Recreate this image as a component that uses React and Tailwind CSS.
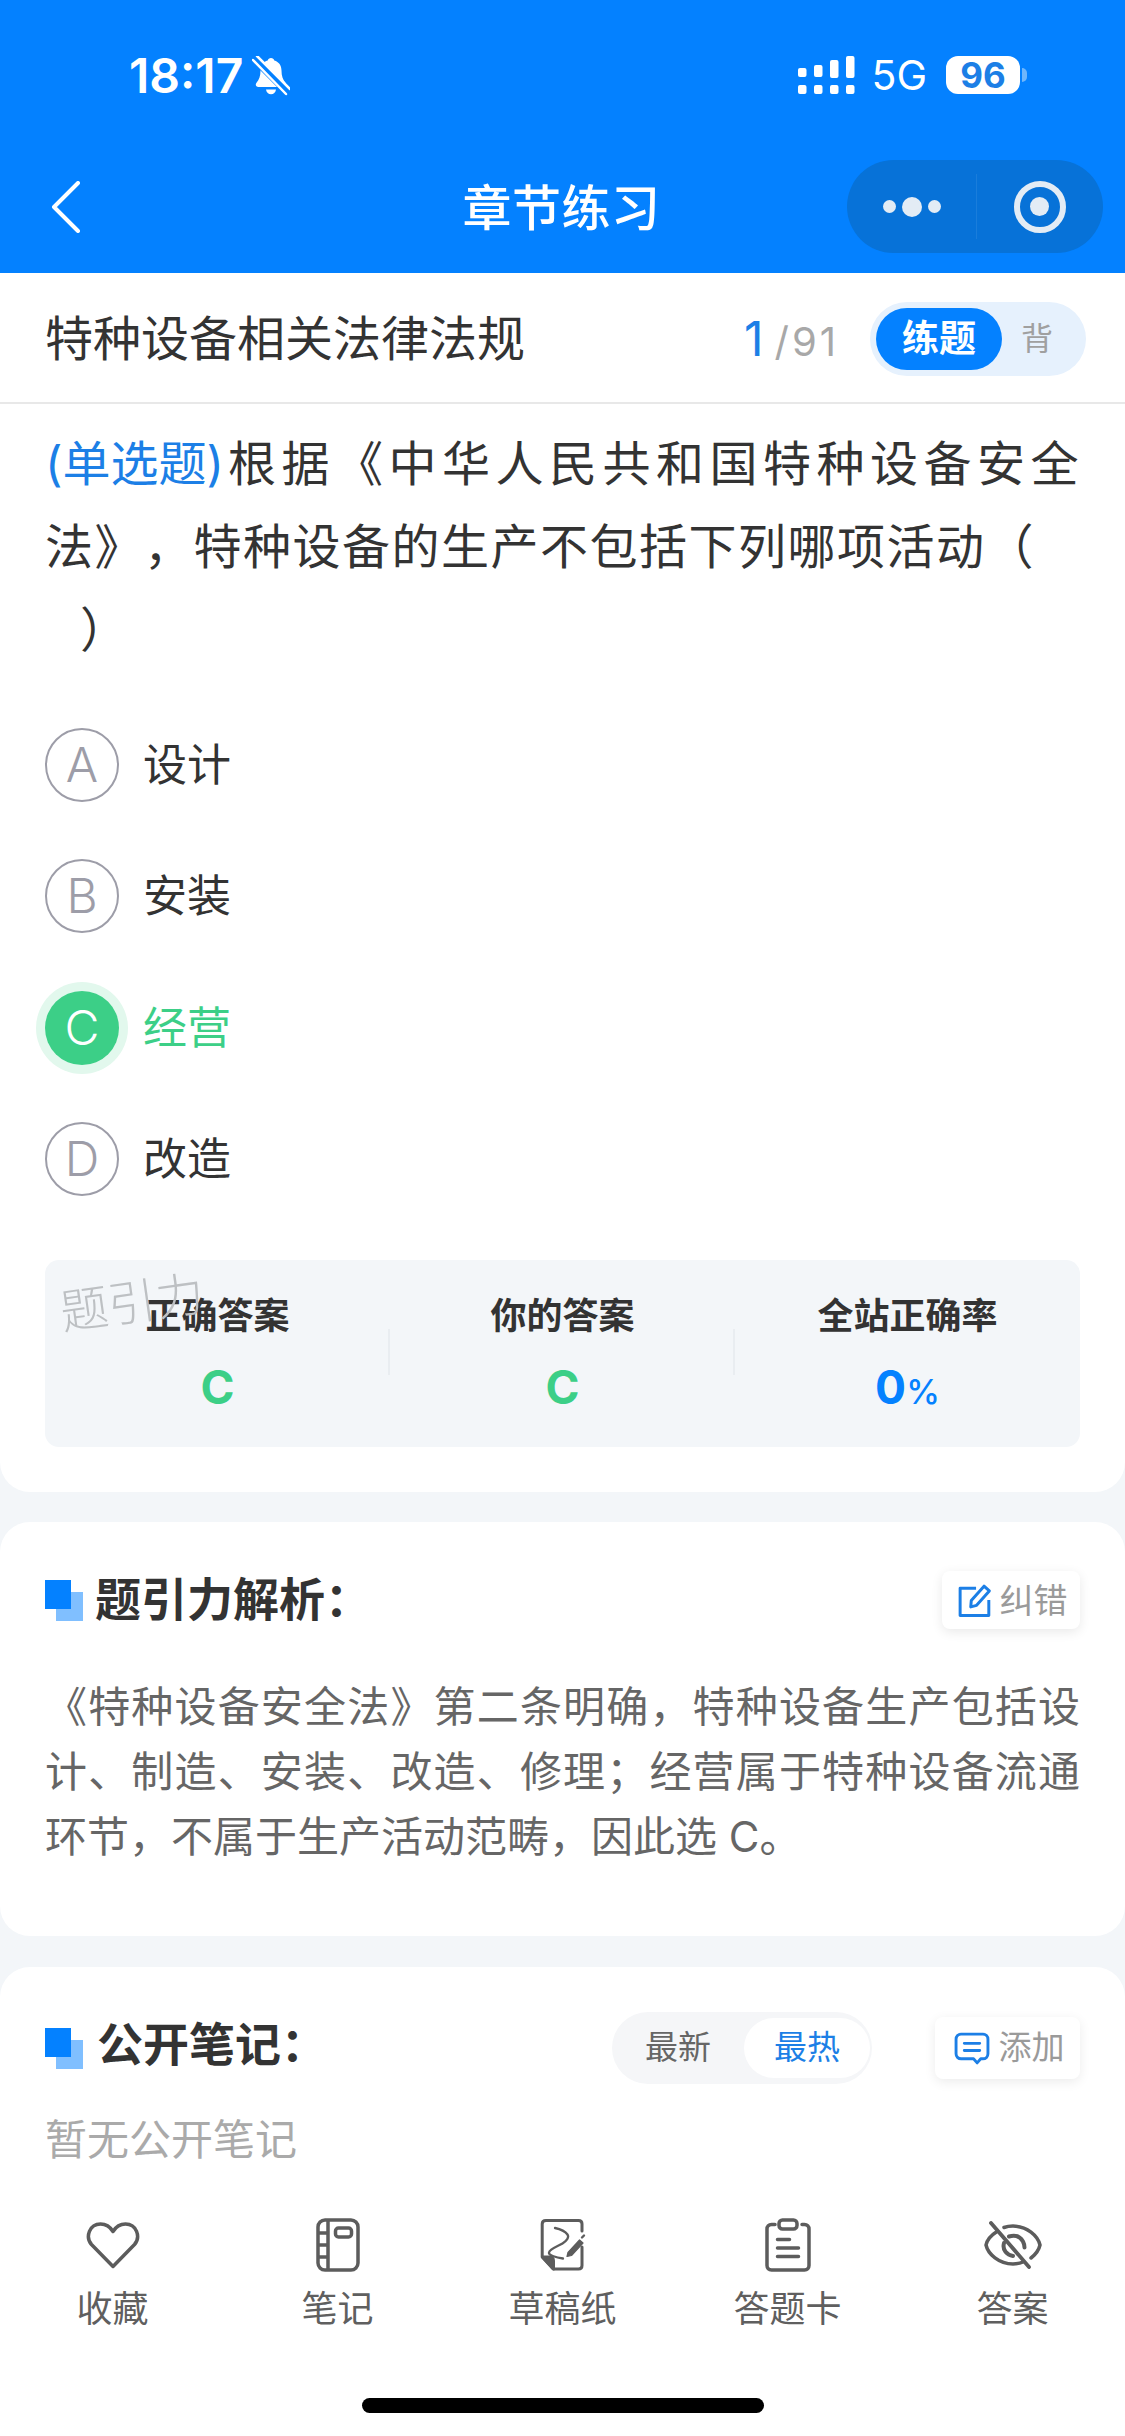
import React from "react";

function Signal() {
  const cols = [
    { x: 0, t: 12, h: 9 },
    { x: 16, t: 9, h: 12 },
    { x: 32, t: 4, h: 18 },
    { x: 48, t: 0, h: 22 },
  ];
  return (
    <svg width="58" height="38" viewBox="0 0 58 38" fill="#fff">
      {cols.map((c) => (
        <g key={c.x}>
          <rect x={c.x + 1} y={c.t} width="8.5" height={c.h} rx="2" />
          <rect x={c.x + 1} y="29" width="8.5" height="9" rx="2" />
        </g>
      ))}
    </svg>
  );
}

function MutedBell() {
  return (
    <svg width="38" height="40" viewBox="0 0 38 40" fill="none">
      <path
        d="M19 2c1.6 0 3 1.1 3.3 2.6 4.6 1.3 7.2 5 7.2 10 0 5.300 1.300 9 4 12.200 1.500 1.800.5 4.200-1.800 4.200H6.300C4 31 3 28.600 4.500 26.800c2.700-3.200 4-6.900 4-12.200 0-5 2.600-8.700 7.200-10C16 3.100 17.400 2 19 2z"
        fill="#fff"
      />
      <path d="M14 33.500h10c-.4 3-2.400 4.800-5 4.800s-4.600-1.800-5-4.800z" fill="#fff" />
      <path d="M2 3l34 34" stroke="#0481ff" strokeWidth="7" />
      <path d="M1 4l33 34M5 0l33 33" stroke="#fff" strokeWidth="2.500" strokeLinecap="round" />
    </svg>
  );
}

function HeadMark() {
  return (
    <svg width="38" height="41" viewBox="0 0 38 41" className="shrink-0">
      <rect x="11" y="12" width="27" height="29" fill="#80bfff" />
      <rect x="0" y="0" width="26" height="29" fill="#0481ff" />
    </svg>
  );
}

function Heart() {
  return (
    <svg width="54" height="48" viewBox="0 0 54 48" fill="none" stroke="#5c5c5c" strokeWidth="3.500" strokeLinejoin="round">
      <path d="M27 45.500 5.500 23.500C-1 16 3.500 3 14.500 3c5.500 0 9.500 2.500 12.500 7.500C30 5.500 34 3 39.500 3 50.500 3 55 16 48.500 23.500L27 45.500z" />
    </svg>
  );
}

function Notebook() {
  return (
    <svg width="44" height="54" viewBox="0 0 44 54" fill="none" stroke="#5c5c5c" strokeWidth="3.500" strokeLinejoin="round">
      <rect x="2" y="2" width="40" height="50" rx="7" />
      <path d="M12 2v50M2 15h10M2 27h10M2 39h10" />
      <rect x="19.500" y="10" width="16" height="9" rx="3" />
    </svg>
  );
}

function Draft() {
  return (
    <svg width="46" height="54" viewBox="0 0 46 54" fill="none" stroke="#5c5c5c" strokeWidth="3" strokeLinejoin="round" strokeLinecap="round">
      <path d="M42 13V6c0-2.200-1.300-3.500-3.500-3.500H6C3.500 2.500 2.200 3.800 2.200 6v33l11 12h25.300c2.200 0 3.500-1.300 3.500-3.500V29" />
      <path d="M2.500 39h7c2.500 0 4 1.500 4 4v8z" fill="#5c5c5c" />
      <path d="M15 10c5 1 10 3 12.500 6.500 2 3-1 6.500-5 9-5 3-12.500 5-13.500 9-.8 3 8 5 14 6" strokeWidth="2.300" />
      <path d="M28 34.500 39.500 22l3.500 3-11.500 12.500-4.500 1z" fill="#5c5c5c" strokeWidth="1.200" />
      <path d="M42 19.500l2-2" strokeWidth="2.400" />
    </svg>
  );
}

function Clipboard() {
  return (
    <svg width="46" height="54" viewBox="0 0 46 54" fill="none" stroke="#5c5c5c" strokeWidth="3.500" strokeLinejoin="round" strokeLinecap="round">
      <path d="M10 6.500H6.500C3.800 6.500 2 8.300 2 11v36.500C2 50.200 3.800 52 6.500 52h33c2.700 0 4.500-1.800 4.500-4.500V11c0-2.700-1.800-4.500-4.500-4.500H37" />
      <rect x="14" y="2" width="18" height="9" rx="3.500" />
      <path d="M12.500 21.500h12M12.500 30h21M12.500 38.500h21" />
    </svg>
  );
}

function EyeOff() {
  return (
    <svg width="58" height="48" viewBox="0 0 58 48" fill="none" stroke="#5c5c5c" strokeWidth="3.500" strokeLinecap="round">
      <path d="M13 10.500C7.500 14 3 19 2 24c2 9 13 19 27 19 4 0 7-.6 10-2M20 6.500C23 5.400 26 5 29 5c14 0 25 10 27 19-1 4.500-4.500 9.500-9 13" />
      <path d="M25 15.500c6-2 11 0 14 5 1 2 1.500 4 1.500 6M20 22c-2 7 3 12 9 13" strokeWidth="4" />
      <path d="M7 2l38 44" strokeWidth="3.800" />
    </svg>
  );
}

function EditIcon() {
  return (
    <svg width="34" height="34" viewBox="0 0 32 32" fill="none" stroke="#1c7fe6" strokeWidth="2.800" strokeLinejoin="round" className="shrink-0">
      <path d="M17 5H2v25.500h27V16" />
      <path d="M12.500 16.500 24.500 3l5 4.500-12 13.500-5.500 1.500z" />
    </svg>
  );
}

function AddIcon() {
  return (
    <svg width="36" height="33" viewBox="0 0 35 32" fill="none" stroke="#1c7fe6" strokeWidth="2.800" strokeLinecap="round" strokeLinejoin="round" className="shrink-0">
      <path d="M7 2h21c3 0 5 2 5 5v14c0 3-2 5-5 5h-2l-3.500 4-3.500-4H7c-3 0-5-2-5-5V7c0-3 2-5 5-5z" />
      <path d="M10 11h15M10 18h15" />
    </svg>
  );
}

function Option({ letter, text, active }) {
  return (
    <div className="flex items-center h-[131.5px]">
      {active ? (
        <div className="flex items-center justify-center w-[74px] h-[74px] rounded-full bg-[#3ccf87] text-white text-[48px] font-light ring-[9px] ring-[#e2f8ed]">
          {letter}
        </div>
      ) : (
        <div className="flex items-center justify-center w-[74px] h-[74px] rounded-full border-[2.500px] border-[#9d9da8] text-[#9d9da8] text-[48px] font-light">
          {letter}
        </div>
      )}
      <span className={`ml-[24px] text-[44px] ${active ? "text-[#3ccf87]" : "text-[#333333]"}`}>{text}</span>
    </div>
  );
}

function Stat({ label, children, divider }) {
  return (
    <div className="relative flex flex-col items-center pt-[34px]">
      <div className="text-[36px] leading-[44px] font-bold text-[#333333]">{label}</div>
      <div className="mt-[24px] h-[50px] flex items-baseline justify-center">{children}</div>
      {divider && <div className="absolute right-0 top-[69px] h-[46px] w-[2px] bg-[#e9edf1]" />}
    </div>
  );
}

function Tab({ label, children }) {
  return (
    <div className="flex flex-col items-center">
      <div className="h-[56px] flex items-center justify-center">{children}</div>
      <div className="mt-[14px] text-[36px] leading-[44px] text-[#5f5f5f]">{label}</div>
    </div>
  );
}

export default function App() {
  return (
    <div
      lang="zh-CN"
      className="w-[1125px] h-[2436px] flex flex-col overflow-hidden bg-white [text-spacing-trim:space-all] font-['Inter','Noto_Sans_CJK_SC',sans-serif]"
    >
      <header className="bg-[#0481ff] text-white shrink-0">
        <div className="h-[126px] pt-[53px] pl-[129px] pr-[98px] flex items-start justify-between">
          <div className="flex items-center h-[46px]">
            <span className="text-[48px] leading-[46px] font-semibold">18:17</span>
            <span className="ml-[9px] flex"><MutedBell /></span>
          </div>
          <div className="flex items-center h-[46px] -mt-[1px]">
            <Signal />
            <span className="ml-[16px] text-[41px] leading-[46px] font-normal">5G</span>
            <div className="ml-[19px] w-[74px] h-[38px] rounded-[12px] bg-white flex items-center justify-center text-[#1c7fe6] text-[35px] font-bold leading-none">
              96
            </div>
            <div className="ml-[2px] w-[5px] h-[14px] rounded-r-full bg-[#6fb6fb]" />
          </div>
        </div>
        <div className="mt-[34px] grid grid-cols-[1fr_auto_1fr] items-center pb-[20px]">
          <div className="pl-[51px] flex">
            <svg width="30" height="52" viewBox="0 0 30 52" fill="none" stroke="#fff" strokeWidth="4" strokeLinecap="round" strokeLinejoin="round">
              <path d="M27 2 3 26l24 24" />
            </svg>
          </div>
          <div className="pt-[4px] pr-[2px] text-[49px] leading-none font-medium tracking-[0.5px]">章节练习</div>
          <div className="flex justify-end pr-[22px]">
            <div className="w-[256px] h-[93px] rounded-full bg-[#0772d8] flex items-center">
              <div className="flex-1 flex items-center justify-center gap-[6px] pl-[2px]">
                <span className="w-[13px] h-[13px] rounded-full bg-[#e3ecf5]" />
                <span className="w-[20px] h-[20px] rounded-full bg-[#e3ecf5]" />
                <span className="w-[13px] h-[13px] rounded-full bg-[#e3ecf5]" />
              </div>
              <div className="w-[1px] h-[65px] bg-[#1a7ddb]" />
              <div className="flex-1 flex items-center justify-center">
                <span className="w-[52px] h-[52px] rounded-full border-[6px] border-[#e3ecf5] flex items-center justify-center">
                  <span className="w-[19px] h-[19px] rounded-full bg-[#e3ecf5]" />
                </span>
              </div>
            </div>
          </div>
        </div>
      </header>

      <main className="flex-1 min-h-0 overflow-hidden bg-[#f3f6f9]">
        <section className="bg-white rounded-b-[30px] pb-[45px]">
          <div className="h-[131px] flex items-center pl-[45px] pr-[39px] pt-[2px] border-b-[2px] border-[#e8e8e8]">
            <div className="text-[48px] text-[#333333] flex-1">特种设备相关法律法规</div>
            <div className="flex items-baseline mr-[31px]">
              <span className="text-[48px] text-[#1c7fe6] font-normal">1</span>
              <span className="ml-[11px] text-[40px] tracking-[3px] text-[#a8a8a8]">/91</span>
            </div>
            <div className="w-[216px] h-[74px] rounded-full bg-[#e6f1fd] flex items-center pl-[6px]">
              <div className="w-[126px] h-[62px] rounded-full bg-[#0481ff] text-white font-bold text-[37px] flex items-center justify-center">
                练题
              </div>
              <div className="flex-1 pr-[14px] text-center text-[32px] text-[#a0a0a0]">背</div>
            </div>
          </div>

          <div className="px-[45px]">
            <p className="pt-[18px] text-[48px] leading-[83px] tracking-[1.5px] text-[#333333] text-justify">
              <span className="text-[#1c7fe6] tracking-[-4px]">(单选题)</span>
              <span className="ml-[4px]">根据《中华人民共和国特种设备安全法》，特种设备的生产不包括下列哪项活动（</span>
              <br />
              <span className="inline-block pl-[35px]">）</span>
            </p>

            <div className="mt-[28px]">
              <Option letter="A" text="设计" />
              <Option letter="B" text="安装" />
              <Option letter="C" text="经营" active />
              <Option letter="D" text="改造" />
            </div>

            <div className="relative mt-[35px] h-[187px] rounded-[14px] bg-[#f3f6f9] grid grid-cols-3">
              <Stat label="正确答案" divider>
                <span className="text-[46px] font-bold leading-[50px] text-[#3ccf87]">C</span>
              </Stat>
              <Stat label="你的答案" divider>
                <span className="text-[46px] font-bold leading-[50px] text-[#3ccf87]">C</span>
              </Stat>
              <Stat label="全站正确率">
                <span className="text-[46px] font-bold leading-[50px] text-[#0481ff]">0</span>
                <span className="text-[34px] font-medium leading-[50px] text-[#0481ff]">%</span>
              </Stat>
              <span className="absolute left-[15px] top-[15px] -rotate-[8deg] text-[48px] leading-[56px] font-light text-[#bdc0c3]">
                题引力
              </span>
            </div>
          </div>
        </section>

        <section className="mt-[30px] bg-white rounded-[30px] px-[45px] pt-[49px] pb-[67px]">
          <div className="flex items-center justify-between h-[58px]">
            <div className="flex items-center">
              <HeadMark />
              <span className="ml-[12px] -mt-[2px] text-[46px] font-bold text-[#333333]">题引力解析：</span>
            </div>
            <div className="w-[138px] h-[58px] rounded-[8px] bg-white shadow-[0_3px_12px_rgba(0,0,0,0.09)] flex items-center justify-center gap-[8px] pl-[3px]">
              <EditIcon />
              <span className="text-[34px] text-[#9a9a9a]">纠错</span>
            </div>
          </div>
          <p className="mt-[45px] text-[42px] leading-[65px] text-justify text-[#666666]">
            《特种设备安全法》第二条明确，特种设备生产包括设计、制造、安装、改造、修理；经营属于特种设备流通环节，不属于生产活动范畴，因此选 C。
          </p>
        </section>

        <section className="mt-[31px] bg-white rounded-t-[30px] px-[45px] pt-[45px] h-[300px]">
          <div className="flex items-center h-[72px]">
            <HeadMark />
            <span className="ml-[14px] -mt-[7px] text-[46px] font-bold text-[#333333]">公开笔记：</span>
            <div className="ml-auto w-[260px] h-[72px] rounded-full bg-[#f5f6f8] flex items-center pr-[2px]">
              <div className="w-[132px] text-center text-[33px] text-[#666666]">最新</div>
              <div className="w-[126px] h-[60px] rounded-full bg-white flex items-center justify-center text-[33px] text-[#1c7fe6]">
                最热
              </div>
            </div>
            <div className="ml-[63px] w-[145px] h-[62px] rounded-[8px] bg-white shadow-[0_3px_12px_rgba(0,0,0,0.08)] flex items-center justify-center gap-[9px] pl-[3px]">
              <AddIcon />
              <span className="text-[33px] text-[#9a9a9a]">添加</span>
            </div>
          </div>
          <div className="mt-[31px] text-[42px] leading-[50px] text-[#aaaaaa]">暂无公开笔记</div>
        </section>
      </main>

      <footer className="shrink-0 h-[246px] bg-white pt-[27px] flex flex-col">
        <div className="grid grid-cols-5">
          <Tab label="收藏"><Heart /></Tab>
          <Tab label="笔记"><Notebook /></Tab>
          <Tab label="草稿纸"><Draft /></Tab>
          <Tab label="答题卡"><Clipboard /></Tab>
          <Tab label="答案"><EyeOff /></Tab>
        </div>
        <div className="mt-[67px] mx-auto w-[402px] h-[15px] rounded-full bg-black" />
      </footer>
    </div>
  );
}
